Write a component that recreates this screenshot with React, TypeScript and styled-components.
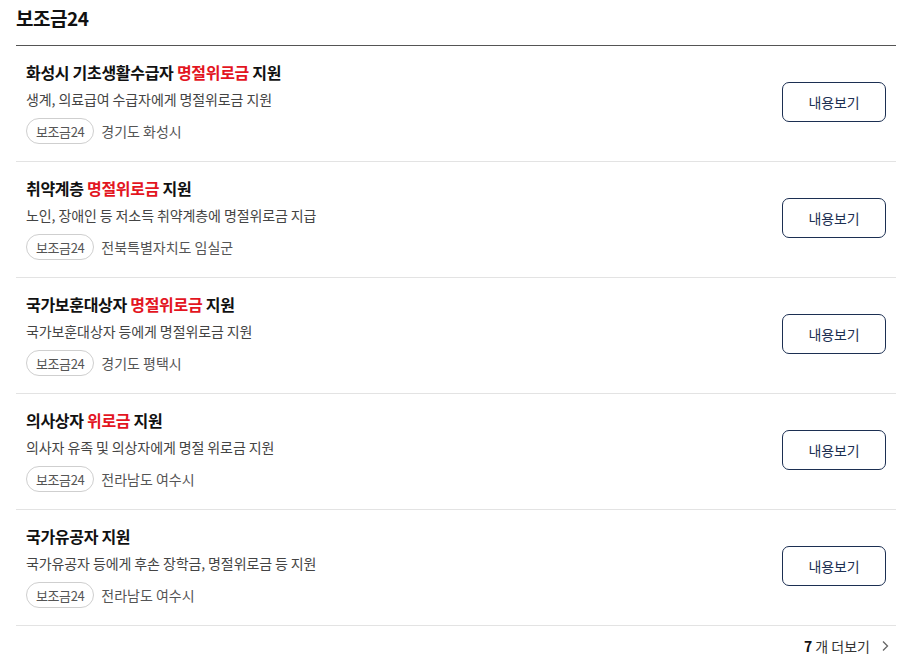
import React from "react";
import styled, { createGlobalStyle } from "styled-components";

const GlobalStyle = createGlobalStyle`
  body {
    margin: 0;
    background: #fff;
    font-family: "Noto Sans CJK KR", "Noto Sans", sans-serif;
    color: #111;
  }
`;

const Page = styled.div`
  padding: 0 16px;
  width: 880px;
`;

const Heading = styled.h2`
  margin: 0;
  height: 46px;
  box-sizing: border-box;
  padding-top: 4px;
  font-size: 19px;
  font-weight: 700;
  line-height: 28px;
  letter-spacing: -0.5px;
  color: #111;
  border-bottom: 1px solid #555;
`;

const List = styled.ul`
  list-style: none;
  margin: 0;
  padding: 0;
`;

const Item = styled.li`
  display: flex;
  align-items: center;
  justify-content: space-between;
  padding: 14px 10px 17px;
  border-bottom: 1px solid #e3e3e3;
`;

const Info = styled.div`
  display: flex;
  flex-direction: column;
`;

const Title = styled.div`
  font-size: 16px;
  font-weight: 700;
  line-height: 24px;
  letter-spacing: -0.3px;
  color: #111;
`;

const Mark = styled.span`
  color: #e3151f;
`;

const Desc = styled.div`
  margin-top: 4px;
  font-size: 14px;
  line-height: 22px;
  letter-spacing: -0.1px;
  color: #444;
`;

const Meta = styled.div`
  display: flex;
  align-items: center;
  gap: 7px;
  margin-top: 8px;
`;

const Tag = styled.span`
  display: inline-flex;
  align-items: center;
  height: 26px;
  box-sizing: border-box;
  padding: 0 9px;
  border: 1px solid #cfcfcf;
  border-radius: 13px;
  font-size: 13px;
  letter-spacing: -0.4px;
  color: #555;
`;

const Region = styled.span`
  font-size: 14px;
  letter-spacing: 0;
  color: #555;
`;

const ViewButton = styled.button`
  width: 104px;
  height: 40px;
  border: 1px solid #1c2f52;
  border-radius: 7px;
  background: #fff;
  font-family: inherit;
  font-size: 14px;
  letter-spacing: -0.1px;
  color: #1c2f52;
  cursor: pointer;
`;

const Footer = styled.div`
  display: flex;
  justify-content: flex-end;
  align-items: center;
  gap: 9px;
  padding: 10px 5px 0 0;
  font-size: 14px;
  color: #333;
  letter-spacing: 0;
`;

const Count = styled.b`
  font-weight: 700;
  color: #111;
`;

type Benefit = {
  title: [string, string, string];
  desc: string;
  region: string;
};

const benefits: Benefit[] = [
  {
    title: ["화성시 기초생활수급자 ", "명절위로금", " 지원"],
    desc: "생계, 의료급여 수급자에게 명절위로금 지원",
    region: "경기도 화성시",
  },
  {
    title: ["취약계층 ", "명절위로금", " 지원"],
    desc: "노인, 장애인 등 저소득 취약계층에 명절위로금 지급",
    region: "전북특별자치도 임실군",
  },
  {
    title: ["국가보훈대상자 ", "명절위로금", " 지원"],
    desc: "국가보훈대상자 등에게 명절위로금 지원",
    region: "경기도 평택시",
  },
  {
    title: ["의사상자 ", "위로금", " 지원"],
    desc: "의사자 유족 및 의상자에게 명절 위로금 지원",
    region: "전라남도 여수시",
  },
  {
    title: ["국가유공자 지원", "", ""],
    desc: "국가유공자 등에게 후손 장학금, 명절위로금 등 지원",
    region: "전라남도 여수시",
  },
];

const App: React.FC = () => {
  return (
    <Page>
      <GlobalStyle />
      <Heading>보조금24</Heading>
      <List>
        {benefits.map((b, i) => (
          <Item key={i}>
            <Info>
              <Title>
                {b.title[0]}
                {b.title[1] && <Mark>{b.title[1]}</Mark>}
                {b.title[2]}
              </Title>
              <Desc>{b.desc}</Desc>
              <Meta>
                <Tag>보조금24</Tag>
                <Region>{b.region}</Region>
              </Meta>
            </Info>
            <ViewButton>내용보기</ViewButton>
          </Item>
        ))}
      </List>
      <Footer>
        <span>
          <Count>7</Count> 개 더보기
        </span>
        <svg width="12" height="12" viewBox="0 0 12 12" fill="none">
          <path d="M4 1.5 L8.5 6 L4 10.5" stroke="#666" strokeWidth="1.3" />
        </svg>
      </Footer>
    </Page>
  );
};

export default App;
